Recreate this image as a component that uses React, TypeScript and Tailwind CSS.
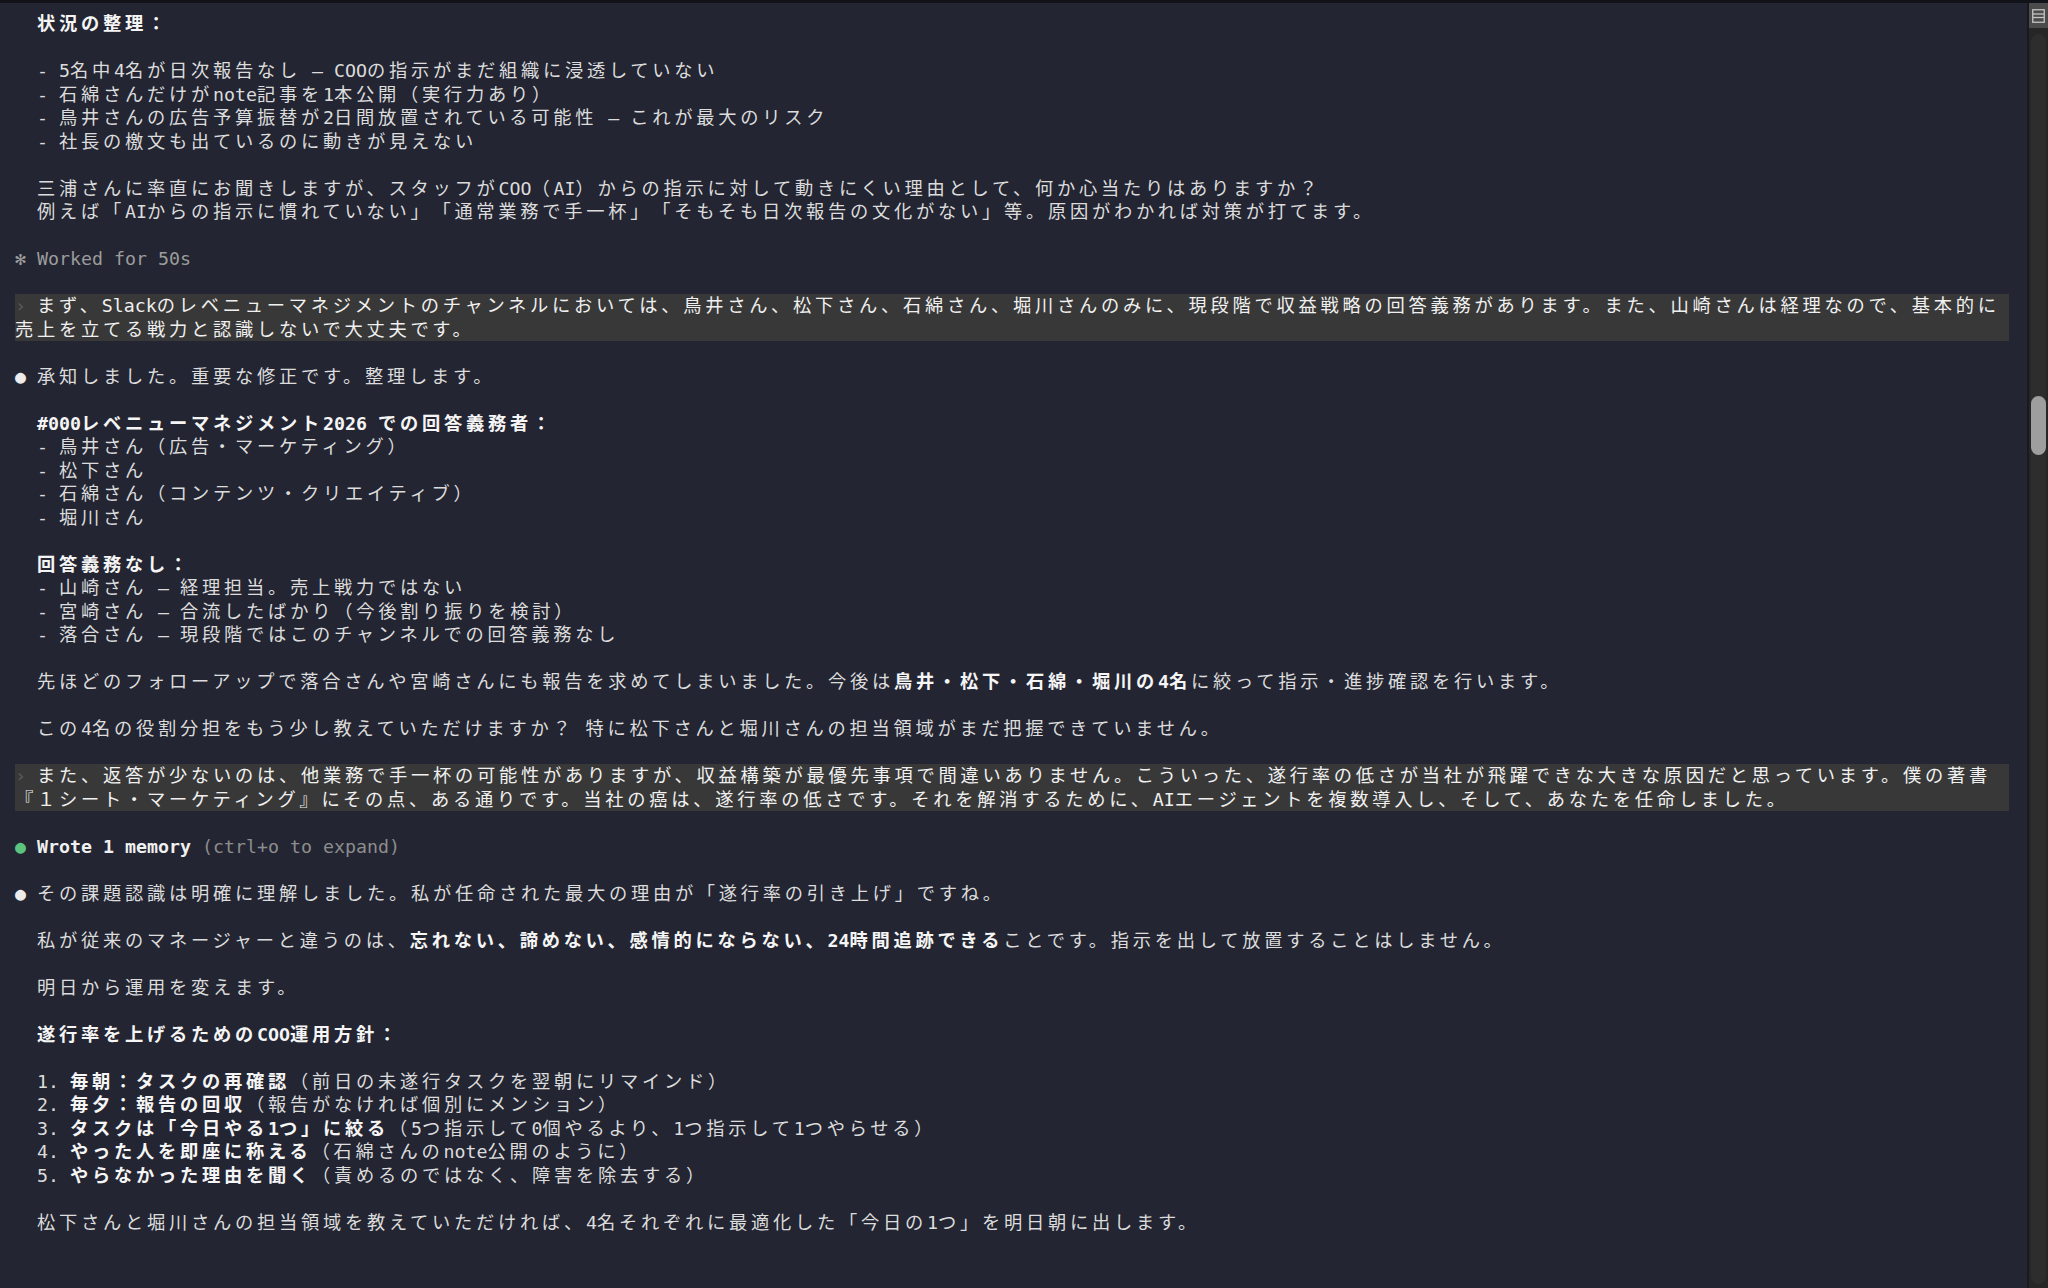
import React from "react";

const NARROW = /^[\u0000-\u007f\u2014\u203a\u25cf]/;

function J({ s }: { s: string }) {
  const parts = s.match(/[\u0000-\u007f\u2014\u203a\u25cf]+|[^\u0000-\u007f\u2014\u203a\u25cf]+/g) ?? [];
  return (
    <>
      {parts.map((p, i) =>
        NARROW.test(p) ? (
          <span key={i}>{p}</span>
        ) : (
          <span key={i} className="tracking-[3.73px]">
            {p}
          </span>
        )
      )}
    </>
  );
}

function R({ s }: { s: string }) {
  const parts = s.split("**");
  return (
    <>
      {parts.map((p, i) =>
        i % 2 ? (
          <span key={i} className="font-bold text-[#f5f5f5]">
            <J s={p} />
          </span>
        ) : (
          <J key={i} s={p} />
        )
      )}
    </>
  );
}

function Blank() {
  return <div className="h-[23.5px]" />;
}

function P({ s, bold }: { s: string; bold?: boolean }) {
  return (
    <div className={bold ? "h-[23.5px] leading-[23.5px] whitespace-pre pl-[22px] font-bold text-[#f5f5f5]" : "h-[23.5px] leading-[23.5px] whitespace-pre pl-[22px]"}>
      <R s={s} />
    </div>
  );
}

function Bullet({ children, green }: { children: React.ReactNode; green?: boolean }) {
  return (
    <div className="h-[23.5px] leading-[23.5px] whitespace-pre flex">
      <span className={green ? "inline-block w-[22px] text-[#5cc47f]" : "inline-block w-[22px] text-[#ececec]"}>●</span>
      <span>{children}</span>
    </div>
  );
}

function Highlight({ first, second }: { first: string; second: string }) {
  return (
    <div className="bg-[#383838] text-[#f0f0f0]">
      <div className="h-[23.5px] leading-[23.5px] whitespace-pre flex">
        <span className="inline-block w-[22px] text-[#5a5a5a]">›</span>
        <span>
          <R s={first} />
        </span>
      </div>
      <div className="h-[23.5px] leading-[23.5px] whitespace-pre">
        <R s={second} />
      </div>
    </div>
  );
}

export default function App() {
  return (
    <div className="w-[2048px] h-[1288px] bg-[#232532] flex flex-col overflow-hidden [text-spacing-trim:space-all]">
      <div className="h-[3px] bg-[#121319] shrink-0" />
      <div className="flex flex-1 min-h-0">
        <div className="flex-1 pl-[15px] pr-[18px] pt-[9px] text-[18.27px] text-[#dcdcdc] font-['DejaVu_Sans_Mono','Noto_Sans_CJK_JP',monospace]">
          <P s="状況の整理：" bold />
          <Blank />
          <P s="- 5名中4名が日次報告なし — COOの指示がまだ組織に浸透していない" />
          <P s="- 石綿さんだけがnote記事を1本公開（実行力あり）" />
          <P s="- 鳥井さんの広告予算振替が2日間放置されている可能性 — これが最大のリスク" />
          <P s="- 社長の檄文も出ているのに動きが見えない" />
          <Blank />
          <P s="三浦さんに率直にお聞きしますが、スタッフがCOO（AI）からの指示に対して動きにくい理由として、何か心当たりはありますか？" />
          <P s="例えば「AIからの指示に慣れていない」「通常業務で手一杯」「そもそも日次報告の文化がない」等。原因がわかれば対策が打てます。" />
          <Blank />
          <div className="h-[23.5px] leading-[23.5px] whitespace-pre flex text-[#9c9c9c]">
            <span className="inline-block w-[22px]">✻</span>
            <span>Worked for 50s</span>
          </div>
          <Blank />
          <Highlight
            first="まず、Slackのレベニューマネジメントのチャンネルにおいては、鳥井さん、松下さん、石綿さん、堀川さんのみに、現段階で収益戦略の回答義務があります。また、山崎さんは経理なので、基本的に"
            second="売上を立てる戦力と認識しないで大丈夫です。"
          />
          <Blank />
          <Bullet>
            <R s="承知しました。重要な修正です。整理します。" />
          </Bullet>
          <Blank />
          <P s="#000レベニューマネジメント2026 での回答義務者：" bold />
          <P s="- 鳥井さん（広告・マーケティング）" />
          <P s="- 松下さん" />
          <P s="- 石綿さん（コンテンツ・クリエイティブ）" />
          <P s="- 堀川さん" />
          <Blank />
          <P s="回答義務なし：" bold />
          <P s="- 山崎さん — 経理担当。売上戦力ではない" />
          <P s="- 宮崎さん — 合流したばかり（今後割り振りを検討）" />
          <P s="- 落合さん — 現段階ではこのチャンネルでの回答義務なし" />
          <Blank />
          <P s="先ほどのフォローアップで落合さんや宮崎さんにも報告を求めてしまいました。今後は**鳥井・松下・石綿・堀川の4名**に絞って指示・進捗確認を行います。" />
          <Blank />
          <P s="この4名の役割分担をもう少し教えていただけますか？ 特に松下さんと堀川さんの担当領域がまだ把握できていません。" />
          <Blank />
          <Highlight
            first="また、返答が少ないのは、他業務で手一杯の可能性がありますが、収益構築が最優先事項で間違いありません。こういった、遂行率の低さが当社が飛躍できな大きな原因だと思っています。僕の著書"
            second="『１シート・マーケティング』にその点、ある通りです。当社の癌は、遂行率の低さです。それを解消するために、AIエージェントを複数導入し、そして、あなたを任命しました。"
          />
          <Blank />
          <Bullet green>
            <span className="font-bold text-[#f0f0f0]">Wrote 1 memory</span>
            <span className="text-[#8d8d8d]"> (ctrl+o to expand)</span>
          </Bullet>
          <Blank />
          <Bullet>
            <R s="その課題認識は明確に理解しました。私が任命された最大の理由が「遂行率の引き上げ」ですね。" />
          </Bullet>
          <Blank />
          <P s="私が従来のマネージャーと違うのは、**忘れない、諦めない、感情的にならない、24時間追跡できる**ことです。指示を出して放置することはしません。" />
          <Blank />
          <P s="明日から運用を変えます。" />
          <Blank />
          <P s="遂行率を上げるためのCOO運用方針：" bold />
          <Blank />
          <P s="1. **毎朝：タスクの再確認**（前日の未遂行タスクを翌朝にリマインド）" />
          <P s="2. **毎夕：報告の回収**（報告がなければ個別にメンション）" />
          <P s="3. **タスクは「今日やる1つ」に絞る**（5つ指示して0個やるより、1つ指示して1つやらせる）" />
          <P s="4. **やった人を即座に称える**（石綿さんのnote公開のように）" />
          <P s="5. **やらなかった理由を聞く**（責めるのではなく、障害を除去する）" />
          <Blank />
          <P s="松下さんと堀川さんの担当領域を教えていただければ、4名それぞれに最適化した「今日の1つ」を明日朝に出します。" />
        </div>
        <div className="w-[21px] shrink-0 flex flex-col bg-[#262626] border-l-[2px] border-[#1a1a1a]">
          <div className="h-[25px] bg-[#4b4b4b] flex items-center justify-center">
            <svg width="13" height="14" viewBox="0 0 13 14" fill="none">
              <rect x="0.75" y="0.75" width="11.5" height="12.5" stroke="#c4c4c4" strokeWidth="1.3" />
              <line x1="1" y1="5" x2="12" y2="5" stroke="#c4c4c4" strokeWidth="1.3" />
              <line x1="1" y1="8.5" x2="12" y2="8.5" stroke="#c4c4c4" strokeWidth="1.3" />
            </svg>
          </div>
          <div className="flex-1 px-[2px] pt-[6px] pb-[4px] flex flex-col">
            <div className="flex-1 rounded-full bg-[#2d2d2d] flex flex-col">
              <div className="mt-[362px] h-[59px] rounded-full bg-[#9e9e9e]" />
            </div>
          </div>
        </div>
      </div>
    </div>
  );
}
